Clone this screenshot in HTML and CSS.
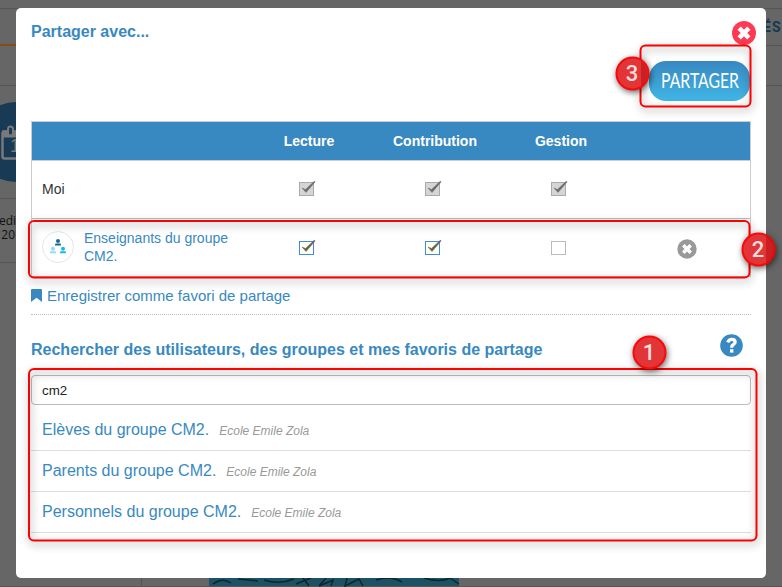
FILE: index.html
```
<!DOCTYPE html>
<html lang="fr">
<head>
<meta charset="utf-8">
<title>Partager avec...</title>
<link rel="stylesheet" href="styles.css">
</head>
<body>
<svg class="backdrop" width="782" height="587" viewBox="0 0 782 587">
  <rect width="782" height="587" fill="#666"/>
  <path d="M0 8.500H782M0 85.500H16M766 45.500H782M766 85.500H782M0 198.500H16M0 262.500H16M141.500 578V587M0 586.500H782" stroke="#555" fill="none"/>
  <path d="M0 45H16" stroke="#8a4a16" stroke-width="2"/>
  <circle cx="16" cy="142" r="40" fill="#183a54"/>
  <rect x="2.500" y="131.500" width="30" height="27" rx="2" fill="#183a54" stroke="#797979" stroke-width="2.500"/>
  <path d="M2 134H16" stroke="#797979" stroke-width="7"/>
  <rect x="8" y="126.500" width="5" height="9" rx="2.500" fill="#183a54" stroke="#797979" stroke-width="2"/>
  <text x="10" y="152" class="bg-number">1</text>
  <text x="16" y="225" class="bg-text" text-anchor="end">redi</text>
  <text x="15" y="239" class="bg-text" text-anchor="end">20</text>
  <text x="763" y="32" class="bg-link">ÉS</text>
  <rect x="209" y="578" width="250" height="8" fill="#1d5265"/>
  <path d="M213 584Q222 577 231 583M238 579L258 581M264 580Q280 585 294 579M296 584L311 578M303 578L309 586M326 578L319 586L333 580L331 586M347 578L345 586L359 579L363 586M376 580Q390 575 402 582M424 578Q440 583 450 578L459 584" stroke="#10242e" stroke-width="1.500" fill="none"/>
</svg>

<main class="modal">
  <header class="modal-head">
    <h1 class="title">Partager avec...</h1>
    <svg class="close" width="24" height="24" viewBox="0 0 24 24"><circle cx="12" cy="12" r="12" fill="#ff3a55"/><path d="M7.200 7.200L16.800 16.800M16.800 7.200L7.200 16.800" stroke="#fff" stroke-width="4.600"/></svg>
  </header>
  <div class="actions">
    <button class="share"><svg width="101" height="40" viewBox="0 0 101 40"><text x="12" y="27" textLength="78" lengthAdjust="spacingAndGlyphs">PARTAGER</text></svg></button>
  </div>

  <div class="table">
    <div class="row head"><span></span><span>Lecture</span><span>Contribution</span><span>Gestion</span><span></span></div>
    <div class="row me">
      <span class="who">Moi</span>
      <span class="cell"><svg class="check disabled" viewBox="0 0 17 16"><rect x=".5" y="1.500" width="14" height="13"/><path d="M3 7L6.500 8.500L15.500 0L16 1L7 11.500Z"/></svg></span>
      <span class="cell"><svg class="check disabled" viewBox="0 0 17 16"><rect x=".5" y="1.500" width="14" height="13"/><path d="M3 7L6.500 8.500L15.500 0L16 1L7 11.500Z"/></svg></span>
      <span class="cell"><svg class="check disabled" viewBox="0 0 17 16"><rect x=".5" y="1.500" width="14" height="13"/><path d="M3 7L6.500 8.500L15.500 0L16 1L7 11.500Z"/></svg></span>
      <span></span>
    </div>
    <div class="row group">
      <span class="who link">
        <svg class="avatar" width="32" height="32" viewBox="0 0 32 32"><circle cx="16" cy="16" r="15.500" fill="#fff" stroke="#e6e6e6"/><g fill="#13699e"><circle cx="16" cy="10" r="2"/><path d="M13 14.500V13.500Q13 12.500 14 12.500H18Q19 12.500 19 13.500V14.500Z"/></g><g fill="#8edcf2"><circle cx="11" cy="17.700" r="2"/><path d="M8 22.200V21.200Q8 20.200 9 20.200H13Q14 20.200 14 21.200V22.200Z"/></g><g fill="#18b8e8"><circle cx="21" cy="17.700" r="2"/><path d="M18 22.200V21.200Q18 20.200 19 20.200H23Q24 20.200 24 21.200V22.200Z"/></g></svg>
        <span class="name">Enseignants du groupe CM2.</span>
      </span>
      <span class="cell"><svg class="check on" viewBox="0 0 17 16"><rect x=".5" y="1.500" width="14" height="13"/><path d="M3 7L6.500 8.500L15.500 0L16 1L7 11.500Z"/></svg></span>
      <span class="cell"><svg class="check on" viewBox="0 0 17 16"><rect x=".5" y="1.500" width="14" height="13"/><path d="M3 7L6.500 8.500L15.500 0L16 1L7 11.500Z"/></svg></span>
      <span class="cell"><svg class="check" viewBox="0 0 17 16"><rect x=".5" y="1.500" width="14" height="13"/></svg></span>
      <span class="remove"><svg width="20" height="20" viewBox="0 0 20 20"><circle cx="10" cy="10" r="9.700" fill="#999"/><path d="M6.300 6.300L13.700 13.700M13.700 6.300L6.300 13.700" stroke="#fff" stroke-width="3.500"/></svg></span>
    </div>
  </div>

  <div class="favorite">
    <svg width="11" height="13" viewBox="0 0 11 13"><path d="M0 1Q0 0 1 0H10Q11 0 11 1V13L5.500 8.700L0 13Z" fill="#3889c1"/></svg>
    <span>Enregistrer comme favori de partage</span>
  </div>

  <div class="search-head">
    <h2 class="title">Rechercher des utilisateurs, des groupes et mes favoris de partage</h2>
    <svg class="help" width="23" height="23" viewBox="0 0 23 23"><circle cx="11.500" cy="11.500" r="11.300" fill="#3889c1"/><path d="M7.700 8.300Q9 5.400 11.700 5.400Q15.100 5.400 15.100 8.200Q15.100 9.700 13.200 10.700Q11.600 11.600 11.600 13.700" fill="none" stroke="#fff" stroke-width="3.300"/><rect x="10" y="15.200" width="3.400" height="3.400" fill="#fff"/></svg>
  </div>
  <input class="search" type="text" value="cm2">
  <ul class="results">
    <li>Elèves du groupe CM2.<em>Ecole Emile Zola</em></li>
    <li>Parents du groupe CM2.<em>Ecole Emile Zola</em></li>
    <li>Personnels du groupe CM2.<em>Ecole Emile Zola</em></li>
  </ul>
</main>

<svg class="notes" width="782" height="587" viewBox="0 0 782 587">
  <g class="frame">
    <rect x="640.500" y="45.500" width="110" height="61" rx="5"/>
    <rect x="29" y="221" width="720.500" height="56.500" rx="5"/>
    <rect x="29" y="369" width="727.500" height="171.500" rx="5"/>
  </g>
  <g class="badge">
    <circle cx="632.500" cy="73.500" r="16"/>
    <circle cx="758.500" cy="249.500" r="16"/>
    <circle cx="649.500" cy="352.500" r="16"/>
  </g>
  <path class="badge-shade" d="M766 235.500A16 16 0 0 1 766 263.500ZM641 75V61.500A15 15 0 0 1 641 86Z"/>
  <g class="badge-text">
    <text x="632" y="81">3</text>
    <text x="758" y="257">2</text>
    <text x="649" y="360">1</text>
  </g>
</svg>
</body>
</html>
```
FILE: styles.css
```
* { box-sizing: border-box; }
body {
  margin: 0;
  height: 587px;
  overflow: hidden;
  position: relative;
  padding: 8px 16px;
  font-family: "Liberation Sans", Arial, sans-serif;
  color: #333;
}
.backdrop, .notes { position: absolute; left: 0; top: 0; }
.notes { pointer-events: none; }
.bg-number { font: 18px "Liberation Sans", sans-serif; fill: #797979; }
.bg-text { font: 12px "Open Sans", sans-serif; fill: #111; }
.bg-link { font: bold 14px Roboto, sans-serif; letter-spacing: 1px; fill: #16374f; }

.modal {
  position: relative;
  width: 750px;
  height: 570px;
  padding: 0 15px;
  background: #fff;
  border-radius: 5px;
}
.title { margin: 0; font-size: 16px; line-height: 20px; font-weight: bold; color: #3889c1; }
.modal-head { display: flex; justify-content: space-between; height: 53px; padding-top: 13px; }
.modal-head .title { padding-top: 1px; }
.close { margin-right: -5px; }
.actions { display: flex; justify-content: flex-end; height: 60px; padding-right: 1px; }
.share {
  width: 101px;
  height: 40px;
  padding: 0;
  border: 0;
  border-radius: 17px;
  background: linear-gradient(#3888c0, #40b5e6);
}
.share svg { display: block; overflow: visible; }
.share text { font: 22px Lato, sans-serif; fill: #fff; }

.table { border: 1px solid #ccc; height: 156px; }
.row {
  display: grid;
  grid-template-columns: 214px repeat(4, 126px);
  align-items: center;
  height: 58px;
  border-bottom: 1px solid #bbb;
}
.row.head {
  height: 39px;
  background: #3889c1;
  border-bottom-color: #ccc;
  color: #fff;
  font-size: 14px;
  font-weight: bold;
  text-align: center;
}
.row.me { padding-bottom: 2px; }
.row.group { height: 57px; border-bottom: 0; }
.who { display: flex; align-items: center; gap: 10px; padding-left: 10px; font-size: 14px; }
.row.group .who { padding-bottom: 2px; }
.link { color: #3889c1; line-height: 18px; }
.avatar { flex: none; }
.name { width: 150px; }
.cell { display: flex; justify-content: center; padding-right: 3px; }
.check { width: 17px; height: 16px; }
.check rect { fill: #fff; stroke: #bbb; }
.check path { fill: #6c6c6c; stroke: #6c6c6c; stroke-width: .5; }
.check.disabled rect { fill: #d5d5d5; stroke: #aaa; }
.check.on rect { fill: #ffffed; stroke: #4285f4; }
.check.on path { fill: #626258; stroke: #626258; }
.remove { display: flex; justify-content: center; padding-top: 2px; }

.favorite {
  display: flex;
  align-items: center;
  gap: 5px;
  height: 38px;
  border-bottom: 1px dotted #bbb;
  font-size: 15px;
  color: #3889c1;
}
.search-head { display: flex; justify-content: space-between; height: 60px; padding-top: 19px; }
.search-head .title { padding-top: 6px; }
.help { margin-right: 8.5px; }
.search {
  display: block;
  width: 720px;
  height: 30px;
  padding: 0 10px;
  border: 1px solid #bbb;
  border-radius: 4px;
  font: 13.33px "Liberation Sans", Arial, sans-serif;
  color: #222;
  outline: 0;
}
.results { list-style: none; margin: 5px 0 0; padding: 0; }
.results li {
  height: 41px;
  padding-left: 11px;
  border-bottom: 1px solid #ddd;
  font-size: 16px;
  line-height: 39px;
  color: #3889c1;
}
.results em { margin-left: 10px; font-size: 12px; color: #999; }

.frame { fill: none; stroke: #f00; stroke-width: 2; filter: drop-shadow(1px 3px 4px rgba(0,0,0,.45)); }
.badge { fill: #e23538; stroke: #fb0808; stroke-width: 2; filter: drop-shadow(1px 2px 3px rgba(0,0,0,.6)); }
.badge-shade { fill: rgba(170,0,5,.4); }
.badge-text { font: 500 22px Roboto, sans-serif; fill: #fbdede; text-anchor: middle; }
```
